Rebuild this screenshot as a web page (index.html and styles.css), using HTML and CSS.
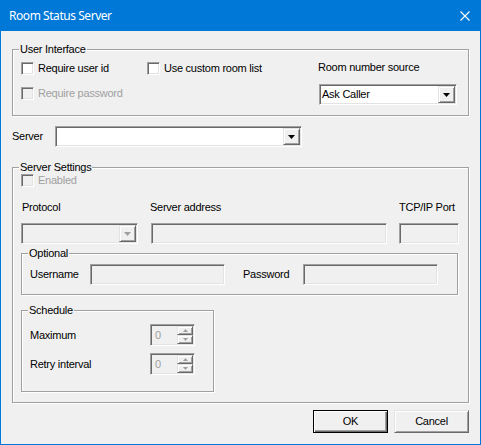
FILE: index.html
```html
<!DOCTYPE html>
<html>
<head>
<meta charset="utf-8">
<title>Room Status Server</title>
<link rel="stylesheet" href="styles.css">
</head>
<body>
<div class="window">
  <div class="titlebar">
    <span class="title">Room Status Server</span>
    <svg class="close" width="10" height="10" viewBox="0 0 10 10"><path d="M0.5 0.5L9.5 9.5M9.5 0.5L0.5 9.5" stroke="#fff" stroke-width="1.1" fill="none"/></svg>
  </div>
  <div class="client">
    <div class="group g-ui">
      <span class="legend">User Interface</span>
      <div class="ui-cols">
        <div class="c1">
          <div class="check"><span class="box"></span><span>Require user id</span></div>
          <div class="check disabled"><span class="box"></span><span>Require password</span></div>
        </div>
        <div class="c2">
          <div class="check"><span class="box"></span><span>Use custom room list</span></div>
        </div>
        <div class="c3">
          <div class="lbl">Room number source</div>
          <div class="combo sunken room-combo">
            <span class="value">Ask Caller</span>
            <span class="drop raised"><svg width="7" height="4" viewBox="0 0 7 4"><path d="M0 0H7L3.5 4Z" fill="#000"/></svg></span>
          </div>
        </div>
      </div>
    </div>

    <div class="server-row">
      <span class="server-lbl">Server</span>
      <div class="combo sunken server-combo">
        <span class="value"></span>
        <span class="drop raised"><svg width="7" height="4" viewBox="0 0 7 4"><path d="M0 0H7L3.5 4Z" fill="#000"/></svg></span>
      </div>
    </div>

    <div class="group g-settings">
      <span class="legend">Server Settings</span>
      <div class="check disabled"><span class="box"></span><span>Enabled</span></div>
      <div class="fields">
        <div class="field f-protocol">
          <div class="flabel">Protocol</div>
          <div class="combo sunken disabled-input">
            <span class="value"></span>
            <span class="drop raised"><svg width="7" height="4" viewBox="0 0 7 4"><path d="M0 0H7L3.5 4Z" fill="#a0a0a0"/></svg></span>
          </div>
        </div>
        <div class="field f-address">
          <div class="flabel">Server address</div>
          <div class="textbox sunken disabled-input"></div>
        </div>
        <div class="field f-port">
          <div class="flabel">TCP/IP Port</div>
          <div class="textbox sunken disabled-input"></div>
        </div>
      </div>

      <div class="group g-optional">
        <span class="legend">Optional</span>
        <div class="opt-row">
          <span class="olabel">Username</span>
          <div class="textbox sunken disabled-input otext"></div>
          <span class="olabel pw">Password</span>
          <div class="textbox sunken disabled-input otext"></div>
        </div>
      </div>

      <div class="group g-schedule">
        <span class="legend">Schedule</span>
        <div class="spin-row">
          <span class="slabel">Maximum</span>
          <div class="spin sunken">
            <span class="spin-val">0</span>
            <span class="spin-btns">
              <span class="sbtn raised"><svg width="5" height="3" viewBox="0 0 5 3"><path d="M0 3H5L2.5 0Z" fill="#a0a0a0"/></svg></span>
              <span class="sbtn raised"><svg width="5" height="3" viewBox="0 0 5 3"><path d="M0 0H5L2.5 3Z" fill="#a0a0a0"/></svg></span>
            </span>
          </div>
        </div>
        <div class="spin-row">
          <span class="slabel">Retry interval</span>
          <div class="spin sunken">
            <span class="spin-val">0</span>
            <span class="spin-btns">
              <span class="sbtn raised"><svg width="5" height="3" viewBox="0 0 5 3"><path d="M0 3H5L2.5 0Z" fill="#a0a0a0"/></svg></span>
              <span class="sbtn raised"><svg width="5" height="3" viewBox="0 0 5 3"><path d="M0 0H5L2.5 3Z" fill="#a0a0a0"/></svg></span>
            </span>
          </div>
        </div>
      </div>
    </div>

    <div class="buttons">
      <button class="btn default">OK</button>
      <button class="btn raised">Cancel</button>
    </div>
  </div>
</div>
</body>
</html>
```

FILE: styles.css
```css
* { box-sizing: border-box; }
html, body { margin: 0; padding: 0; }
body {
  width: 481px;
  height: 445px;
  overflow: hidden;
  background: #f0f0f0;
  font-family: "Liberation Sans", Arial, sans-serif;
  font-size: 11px;
  line-height: 13px;
  letter-spacing: -0.25px;
  color: #000;
}
.window {
  width: 481px;
  height: 445px;
  border: 1px solid #0078d7;
  border-top: 0;
  display: flex;
  flex-direction: column;
  background: #f0f0f0;
}
.titlebar {
  height: 31px;
  flex: none;
  background: #0078d7;
  color: #fff;
  display: flex;
  align-items: center;
  justify-content: space-between;
  padding: 0 10px 0 8px;
  font-family: "Noto Sans", "Open Sans", sans-serif;
  font-size: 12px;
  letter-spacing: -0.45px;
  line-height: 31px;
}
.close { display: block; }
.client {
  flex: 1;
  padding: 18px 11px 0;
  display: flex;
  flex-direction: column;
}

/* 3D borders */
.sunken {
  border: 1px solid;
  border-color: #a0a0a0 #fff #fff #a0a0a0;
  padding: 1px;
  box-shadow: inset 1px 1px 0 #696969, inset -1px -1px 0 #e3e3e3;
}
.raised {
  border: 1px solid;
  border-color: #e3e3e3 #696969 #696969 #e3e3e3;
  box-shadow: inset 1px 1px 0 #fff, inset -1px -1px 0 #a0a0a0;
  background: #f0f0f0;
}

/* group boxes */
.group {
  position: relative;
  border: 1px solid #a0a0a0;
  box-shadow: inset 1px 1px 0 #fff, 1px 1px 0 #fff;
}
.legend {
  position: absolute;
  left: 6px;
  top: -7px;
  padding: 0 1px;
  background: #f0f0f0;
  white-space: nowrap;
}

/* checkboxes */
.check {
  display: flex;
  align-items: center;
  gap: 4px;
  height: 13px;
  white-space: nowrap;
}
.box {
  width: 13px;
  height: 13px;
  flex: none;
  background: #fff;
  border: 1px solid;
  border-color: #a0a0a0 #fff #fff #a0a0a0;
  box-shadow: inset 1px 1px 0 #696969, inset -1px -1px 0 #e3e3e3;
}
.check.disabled { color: #a0a0a0; }
.check.disabled .box { background: #f0f0f0; }

/* combos */
.combo {
  height: 21px;
  display: flex;
  background: #fff;
}
.combo .value {
  flex: 1;
  padding-left: 1px;
  line-height: 17px;
  white-space: nowrap;
}
.combo .drop {
  width: 17px;
  flex: none;
  display: flex;
  align-items: center;
  justify-content: center;
}
.drop svg { display: block; }
.disabled-input { background: #f0f0f0; }

/* user interface group */
.g-ui {
  height: 67px;
  padding: 12px 0 0 8px;
}
.ui-cols { display: flex; }
.c1 {
  width: 126px;
  display: flex;
  flex-direction: column;
  gap: 12px;
}
.c2 { width: 171px; }
.c3 { margin-top: -1px; }
.room-combo {
  width: 138px;
  margin-top: 10px;
  margin-left: 1px;
}

/* server row */
.server-row {
  display: flex;
  align-items: center;
  margin-top: 10px;
}
.server-lbl { width: 43px; }
.server-combo { width: 247px; }

/* server settings */
.g-settings {
  margin-top: 20px;
  height: 236px;
  padding: 6px 0 0 8px;
}
.fields {
  display: flex;
  margin-top: 14px;
}
.flabel { margin-bottom: 9px; white-space: nowrap; }
.f-protocol { width: 117px; }
.f-protocol .flabel { padding-left: 1px; }
.f-address { width: 236px; margin-left: 13px; }
.f-address .flabel { margin-left: -1px; }
.f-port { width: 60px; margin-left: 12px; }
.textbox { height: 21px; }

.g-optional {
  margin-top: 9px;
  width: 437px;
  height: 42px;
  padding: 10px 0 0 8px;
}
.opt-row {
  display: flex;
  align-items: center;
}
.olabel { width: 60px; }
.olabel.pw { margin-left: 18px; }
.otext { width: 135px; }

.g-schedule {
  margin-top: 15px;
  width: 193px;
  height: 82px;
  padding: 13px 0 0 8px;
  display: flex;
  flex-direction: column;
  gap: 7px;
}
.spin-row {
  display: flex;
  align-items: center;
}
.slabel { width: 120px; }
.spin {
  width: 45px;
  height: 22px;
  display: flex;
  background: #f0f0f0;
}
.spin-val {
  flex: 1;
  padding-left: 3px;
  color: #a0a0a0;
  line-height: 18px;
}
.spin-btns {
  width: 16px;
  display: flex;
  flex-direction: column;
}
.sbtn {
  flex: 1;
  display: flex;
  align-items: center;
  justify-content: center;
}
.sbtn svg { display: block; }

/* buttons */
.buttons {
  display: flex;
  justify-content: flex-end;
  gap: 6px;
  margin-top: 7px;
}
.btn {
  width: 75px;
  height: 23px;
  padding: 0;
  margin: 0;
  font: inherit;
  letter-spacing: inherit;
  color: #000;
  background: #f0f0f0;
}
.btn.default {
  border: 1px solid #000;
  box-shadow: inset 1px 1px 0 #fff, inset -1px -1px 0 #696969, inset -2px -2px 0 #a0a0a0;
}
```
